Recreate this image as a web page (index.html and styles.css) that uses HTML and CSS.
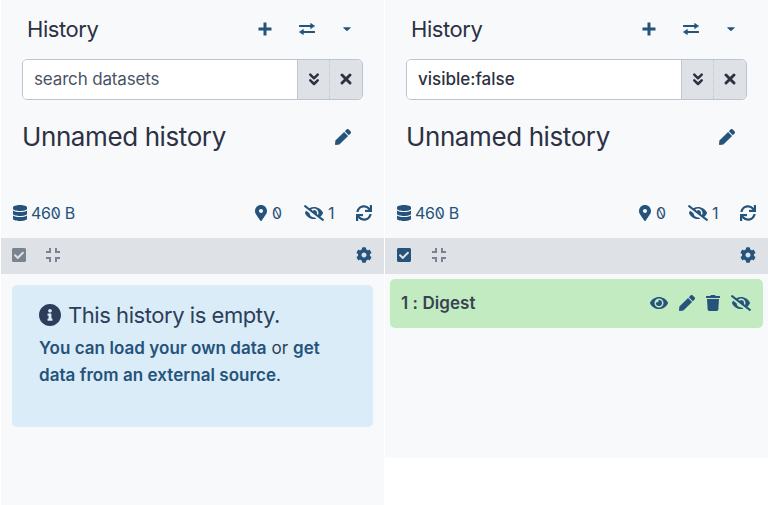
FILE: index.html
```html
<!DOCTYPE html>
<html lang="en">
<head>
<meta charset="utf-8">
<title>History</title>
<link rel="stylesheet" href="styles.css">
</head>
<body>
<svg class="sprite" aria-hidden="true">
<symbol id="plus" viewBox="0 0 14 14"><path d="M7 .5v13M.5 7h13" fill="none" stroke="currentColor" stroke-width="3" stroke-linecap="butt"/></symbol>
<symbol id="exchange" viewBox="0 0 16 12"><path d="M.7 3h12M3.3 9h12" fill="none" stroke="currentColor" stroke-width="2" stroke-linecap="round"/><path d="M11.6.2 15.7 3l-4.1 2.8zM4.4 6.2.3 9l4.1 2.8z" stroke="currentColor" stroke-width=".5" stroke-linejoin="round"/></symbol>
<symbol id="caret" viewBox="0 0 8 4"><path d="M.8.2h6.4c.6 0 .7.5.4.8L4.5 3.7a.8.8 0 0 1-1 0L.4 1C.1.7.2.2.8.2z"/></symbol>
<symbol id="double-down" viewBox="0 0 10 13"><path d="m1.3 1.7 3.7 3.6 3.7-3.6M1.3 7.4 5 11l3.7-3.6" fill="none" stroke="currentColor" stroke-width="2.5" stroke-linecap="round" stroke-linejoin="round"/></symbol>
<symbol id="times" viewBox="0 0 12 12"><path d="m2 2 8 8m0-8-8 8" fill="none" stroke="currentColor" stroke-width="2.9" stroke-linecap="round"/></symbol>
<symbol id="pen" viewBox="0 0 512 512"><path d="M290.74 93.24l128.02 128.02-277.99 277.99-114.14 12.6C11.35 513.54-1.56 500.62.14 485.34l12.7-114.22 277.9-277.88zm207.2-19.06l-60.11-60.11c-18.75-18.75-49.16-18.75-67.91 0l-56.55 56.55 128.02 128.02 56.55-56.55c18.75-18.76 18.75-49.16 0-67.91z"/></symbol>
<symbol id="database" viewBox="0 0 448 512"><path d="M448 73.143v45.714C448 159.143 347.667 192 224 192S0 159.143 0 118.857V73.143C0 32.857 100.333 0 224 0s224 32.857 224 73.143zM448 176v102.857C448 319.143 347.667 352 224 352S0 319.143 0 278.857V176c48.125 33.143 136.208 48.572 224 48.572S399.874 209.143 448 176zm0 160v102.857C448 479.143 347.667 512 224 512S0 479.143 0 438.857V336c48.125 33.143 136.208 48.572 224 48.572S399.874 369.143 448 336z"/></symbol>
<symbol id="marker" viewBox="0 0 384 512"><path d="M172.268 501.67C26.97 291.031 0 269.413 0 192 0 85.961 85.961 0 192 0s192 85.961 192 192c0 77.413-26.97 99.031-172.268 309.67-9.535 13.774-29.93 13.773-39.464 0zM192 256c35 0 64-29 64-64s-29-64-64-64-64 29-64 64 29 64 64 64z"/></symbol>
<symbol id="eye-slash" viewBox="0 0 640 512"><path d="M320 400c-75.85 0-137.25-58.71-142.9-133.11L72.2 185.82c-13.79 17.3-26.48 35.59-36.72 55.59a32.35 32.35 0 0 0 0 29.19C89.71 376.41 197.07 448 320 448c26.91 0 52.87-4 77.89-10.46L346 397.39a144.13 144.13 0 0 1-26 2.61zm313.82 58.1l-110.55-85.44a331.25 331.25 0 0 0 81.25-102.07 32.35 32.35 0 0 0 0-29.19C550.29 135.59 442.93 64 320 64a308.15 308.15 0 0 0-147.32 37.7L45.46 3.37A16 16 0 0 0 23 6.18L3.37 31.45A16 16 0 0 0 6.18 53.9l588.36 454.73a16 16 0 0 0 22.46-2.81l19.64-25.27a16 16 0 0 0-2.82-22.45zm-183.72-142l-39.3-30.38A94.75 94.75 0 0 0 416 256a94.76 94.76 0 0 0-121.31-92.21A47.65 47.65 0 0 1 304 192a46.64 46.64 0 0 1-1.54 10l-73.61-56.89A142.31 142.31 0 0 1 320 112a143.92 143.92 0 0 1 144 144c0 21.63-5.29 41.79-13.9 60.11z"/></symbol>
<symbol id="eye" viewBox="0 0 576 512"><path d="M572.52 241.4C518.29 135.59 410.93 64 288 64S57.68 135.64 3.48 241.41a32.35 32.35 0 0 0 0 29.19C57.71 376.41 165.07 448 288 448s230.32-71.64 284.52-177.41a32.35 32.35 0 0 0 0-29.19zM288 400a144 144 0 1 1 144-144 143.93 143.93 0 0 1-144 144zm0-240a95.31 95.31 0 0 0-25.31 3.79 47.85 47.85 0 0 1-66.9 66.9A95.78 95.78 0 1 0 288 160z"/></symbol>
<symbol id="trash" viewBox="0 0 448 512"><path d="M432 32H312l-9.4-18.7A24 24 0 0 0 281.1 0H166.8a23.72 23.72 0 0 0-21.4 13.3L136 32H16A16 16 0 0 0 0 48v32a16 16 0 0 0 16 16h416a16 16 0 0 0 16-16V48a16 16 0 0 0-16-16zM53.2 467a48 48 0 0 0 47.9 45h245.8a48 48 0 0 0 47.9-45L416 128H32z"/></symbol>
<symbol id="cog" viewBox="0 0 512 512"><path d="M487.4 315.7l-42.6-24.6c4.3-23.2 4.3-47 0-70.2l42.6-24.6c4.9-2.8 7.1-8.6 5.5-14-11.1-35.6-30-67.8-54.7-94.6-3.8-4.1-10-5.1-14.8-2.3L380.8 110c-17.9-15.4-38.5-27.3-60.8-35.1V25.8c0-5.6-3.9-10.5-9.4-11.7-36.7-8.2-74.3-7.8-109.2 0-5.5 1.2-9.4 6.1-9.4 11.7V75c-22.2 7.9-42.8 19.8-60.8 35.1L88.7 85.5c-4.9-2.8-11-1.9-14.8 2.3-24.7 26.7-43.6 58.9-54.7 94.6-1.7 5.4.6 11.2 5.5 14L67.3 221c-4.3 23.2-4.3 47 0 70.2l-42.6 24.6c-4.9 2.8-7.1 8.6-5.5 14 11.1 35.6 30 67.8 54.7 94.6 3.8 4.1 10 5.1 14.8 2.3l42.6-24.6c17.9 15.4 38.5 27.3 60.8 35.1v49.2c0 5.6 3.9 10.5 9.4 11.7 36.7 8.2 74.3 7.8 109.2 0 5.5-1.2 9.4-6.1 9.4-11.7v-49.2c22.2-7.9 42.8-19.8 60.8-35.1l42.6 24.6c4.9 2.8 11 1.9 14.8-2.3 24.7-26.7 43.6-58.9 54.7-94.6 1.5-5.5-.7-11.3-5.6-14.1zM256 336c-44.1 0-80-35.9-80-80s35.9-80 80-80 80 35.9 80 80-35.9 80-80 80z"/></symbol>
<symbol id="sync" viewBox="0 0 512 512"><path d="M440.65 12.57l4 82.77A247.16 247.16 0 0 0 255.83 8C134.73 8 33.91 94.92 12.29 209.82A12 12 0 0 0 24.09 224h49.05a12 12 0 0 0 11.67-9.26 175.91 175.91 0 0 1 317-56.94l-101.46-4.86a12 12 0 0 0-12.57 12v47.41a12 12 0 0 0 12 12H500a12 12 0 0 0 12-12V12.57A12 12 0 0 0 500 .57h-47.37a12 12 0 0 0-11.98 12zM255.83 432a175.61 175.61 0 0 1-146-77.8l101.8 4.87a12 12 0 0 0 12.57-12v-47.4a12 12 0 0 0-12-12H12a12 12 0 0 0-12 12V500a12 12 0 0 0 12 12h47.35a12 12 0 0 0 12-12l-4.15-82.57A247.17 247.17 0 0 0 255.83 504c121.11 0 221.93-86.92 243.55-201.82a12 12 0 0 0-11.8-14.18h-49.05a12 12 0 0 0-11.67 9.26A175.86 175.86 0 0 1 255.83 432z"/></symbol>
<symbol id="check" viewBox="0 32 448 448"><path d="M400 480H48c-26.51 0-48-21.49-48-48V80c0-26.51 21.49-48 48-48h352c26.51 0 48 21.49 48 48v352c0 26.51-21.49 48-48 48zm-204.686-98.059l184-184c6.248-6.248 6.248-16.379 0-22.627l-22.627-22.627c-6.248-6.248-16.379-6.249-22.628 0L184 302.745l-70.059-70.059c-6.248-6.248-16.379-6.248-22.628 0l-22.627 22.627c-6.248 6.248-6.248 16.379 0 22.627l104 104c6.249 6.25 16.379 6.25 22.628.001z"/></symbol>
<symbol id="compress" viewBox="0 0 14 14"><path d="M0 4h4V0M10 0v4h4M0 10h4v4M10 14v-4h4" fill="none" stroke="currentColor" stroke-width="2"/></symbol>
<symbol id="info" viewBox="8 8 496 496"><path d="M256 8C119.043 8 8 119.083 8 256c0 136.997 111.043 248 248 248s248-111.003 248-248C504 119.083 392.957 8 256 8zm0 110c23.196 0 42 18.804 42 42s-18.804 42-42 42-42-18.804-42-42 18.804-42 42-42zm56 254c0 6.627-5.373 12-12 12h-88c-6.627 0-12-5.373-12-12v-24c0-6.627 5.373-12 12-12h12v-64h-12c-6.627 0-12-5.373-12-12v-24c0-6.627 5.373-12 12-12h64c6.627 0 12 5.373 12 12v100h12c6.627 0 12 5.373 12 12v24z"/></symbol>
</svg>
<main class="histories">
  <section class="panel">
    <header class="head"><h2 class="title">History</h2><nav class="actions"><svg class="i-plus"><use href="#plus"/></svg><svg class="i-exchange"><use href="#exchange"/></svg><svg class="i-caret"><use href="#caret"/></svg></nav></header>
    <div class="search"><div class="field"><span class="placeholder">search datasets</span></div><button class="toggle"><svg class="i-double"><use href="#double-down"/></svg></button><button class="clear"><svg class="i-times"><use href="#times"/></svg></button></div>
    <div class="name"><h3 class="name-text">Unnamed history</h3><svg class="i-16"><use href="#pen"/></svg></div>
    <div class="stats"><svg class="i-14"><use href="#database"/></svg><span class="size">46<span class="zero">0</span> B</span><svg class="i-marker"><use href="#marker"/></svg><span class="active"><span class="zero">0</span></span><svg class="i-slash"><use href="#eye-slash"/></svg><span class="hidden-count">1</span><svg class="i-sync"><use href="#sync"/></svg></div>
    <div class="bar"><svg class="i-box muted"><use href="#check"/></svg><svg class="i-compress muted"><use href="#compress"/></svg><svg class="i-cog"><use href="#cog"/></svg></div>
    <div class="alert"><h4 class="alert-title"><svg class="i-info"><use href="#info"/></svg><span class="alert-heading">This history is empty.</span></h4><p class="alert-text"><span class="line"><a>You can load your own data</a> or <a>get</a></span><span class="line"><a>data from an external source</a>.</span></p></div>
  </section>
  <section class="panel short">
    <header class="head"><h2 class="title">History</h2><nav class="actions"><svg class="i-plus"><use href="#plus"/></svg><svg class="i-exchange"><use href="#exchange"/></svg><svg class="i-caret"><use href="#caret"/></svg></nav></header>
    <div class="search"><div class="field"><span class="query">visible:false</span></div><button class="toggle"><svg class="i-double"><use href="#double-down"/></svg></button><button class="clear"><svg class="i-times"><use href="#times"/></svg></button></div>
    <div class="name"><h3 class="name-text">Unnamed history</h3><svg class="i-16"><use href="#pen"/></svg></div>
    <div class="stats"><svg class="i-14"><use href="#database"/></svg><span class="size">46<span class="zero">0</span> B</span><svg class="i-marker"><use href="#marker"/></svg><span class="active"><span class="zero">0</span></span><svg class="i-slash"><use href="#eye-slash"/></svg><span class="hidden-count">1</span><svg class="i-sync"><use href="#sync"/></svg></div>
    <div class="bar selecting"><svg class="i-box"><use href="#check"/></svg><svg class="i-compress muted"><use href="#compress"/></svg><svg class="i-cog"><use href="#cog"/></svg></div>
    <div class="dataset"><span class="dataset-name">1 : Digest</span><div class="dataset-actions"><svg class="i-eye"><use href="#eye"/></svg><svg class="i-16"><use href="#pen"/></svg><svg class="i-14"><use href="#trash"/></svg><svg class="i-slash"><use href="#eye-slash"/></svg></div></div>
  </section>
</main>
</body>
</html>
```
FILE: styles.css
```css
* { box-sizing: border-box; }
body { margin: 0; background: #fff; font-family: Inter, "Liberation Sans", sans-serif; color: #2c3143; overflow: hidden; }
svg { display: block; flex: none; fill: currentColor; color: #25537b; }
.sprite { display: none; }
h2, h3, h4, p { margin: 0; font-weight: 400; }
span { white-space: nowrap; }
.histories { display: grid; grid-template-columns: 384px 384px; align-items: start; height: 505px; }
.panel { height: 505px; border-left: 1px solid #fff; background: #f8f9fb; }
.short { height: 458px; }

.head { display: flex; align-items: center; justify-content: space-between; height: 59px; padding: 0 33px 1px 26px; }
.title { font-size: 22px; line-height: 30px; letter-spacing: -.45px; }
.actions { display: flex; align-items: center; }
.i-plus { width: 14px; height: 14px; margin-right: 27px; }
.i-exchange { width: 16px; height: 12px; margin-right: 28px; }
.i-caret { width: 8px; height: 4px; }

.search { display: flex; width: 341px; height: 41px; margin-left: 21px; border: 1px solid #bdc6d0; border-radius: 5px; overflow: hidden; background: #dee2e6; }
.field { display: flex; align-items: center; flex: 1; padding: 0 0 2px 11px; background: #fff; }
.placeholder { font-size: 17px; letter-spacing: -.15px; color: #495366; }
.query { font-size: 17px; font-weight: 500; }
button { display: flex; align-items: center; justify-content: center; height: 100%; padding: 0 0 1px; border: 0; border-left: 1px solid #bdc6d0; background: #dee2e6; }
.toggle { width: 32px; }
.clear { width: 33px; border-left-style: dotted; }
.search svg { color: #2c3143; }
.i-double { width: 10px; height: 13px; }
.i-times { width: 12px; height: 12px; }

.name { display: flex; align-items: center; justify-content: space-between; height: 75px; padding: 0 33px 1px 21px; }
.name-text { font-size: 26px; line-height: 34px; letter-spacing: -.4px; }
.i-16 { width: 16px; height: 16px; }

.stats { display: flex; align-items: center; height: 63px; padding: 13px 12px 0 12px; font-size: 16px; color: #25537b; }
.i-14 { width: 14px; height: 16px; }
.size { margin: 0 auto 0 4px; letter-spacing: -.3px; }
.zero { display: inline-block; transform: scaleX(-1); font-feature-settings: "zero"; }
.i-marker { width: 12px; height: 16px; }
.active { width: 11px; margin: 0 21px 0 5px; }
.i-slash { width: 20px; height: 16px; }
.hidden-count { width: 8px; margin: 0 20px 0 4px; }
.i-sync { width: 16px; height: 16px; }

.bar { display: flex; align-items: center; height: 36px; padding: 0 12px 2px 11px; background: #dee2e6; }
.selecting { padding-left: 12px; }
.i-box { width: 14px; height: 14px; margin-right: 20px; }
.selecting .i-box { margin-right: 21px; }
.muted { color: #7b8390; }
.i-compress { width: 14px; height: 14px; margin-right: auto; }
.i-cog { width: 16px; height: 16px; }

.alert { width: 361px; height: 142px; margin: 11px 0 0 11px; padding: 15px 27px; border-radius: 5px; background: #daecf8; color: #2c3e59; }
.alert-title { display: flex; align-items: center; height: 30px; font-size: 22px; letter-spacing: -.45px; }
.i-info { width: 22px; height: 22px; margin-right: 7px; color: #2c3e59; }
.alert-text { padding-top: 5px; font-size: 17px; line-height: 27px; letter-spacing: .05px; }
.line { display: block; }
a { color: #25537b; font-weight: 600; }

.dataset { display: flex; align-items: center; justify-content: space-between; width: 373px; height: 49px; margin: 5px 0 0 5px; padding: 0 12px 2px 11px; border-radius: 5px; background: #c2ebc1; }
.dataset-name { font-size: 17px; font-weight: 600; letter-spacing: .05px; color: #3b4252; }
.dataset-actions { display: flex; align-items: center; gap: 11px; }
.i-eye { width: 18px; height: 16px; }
```
